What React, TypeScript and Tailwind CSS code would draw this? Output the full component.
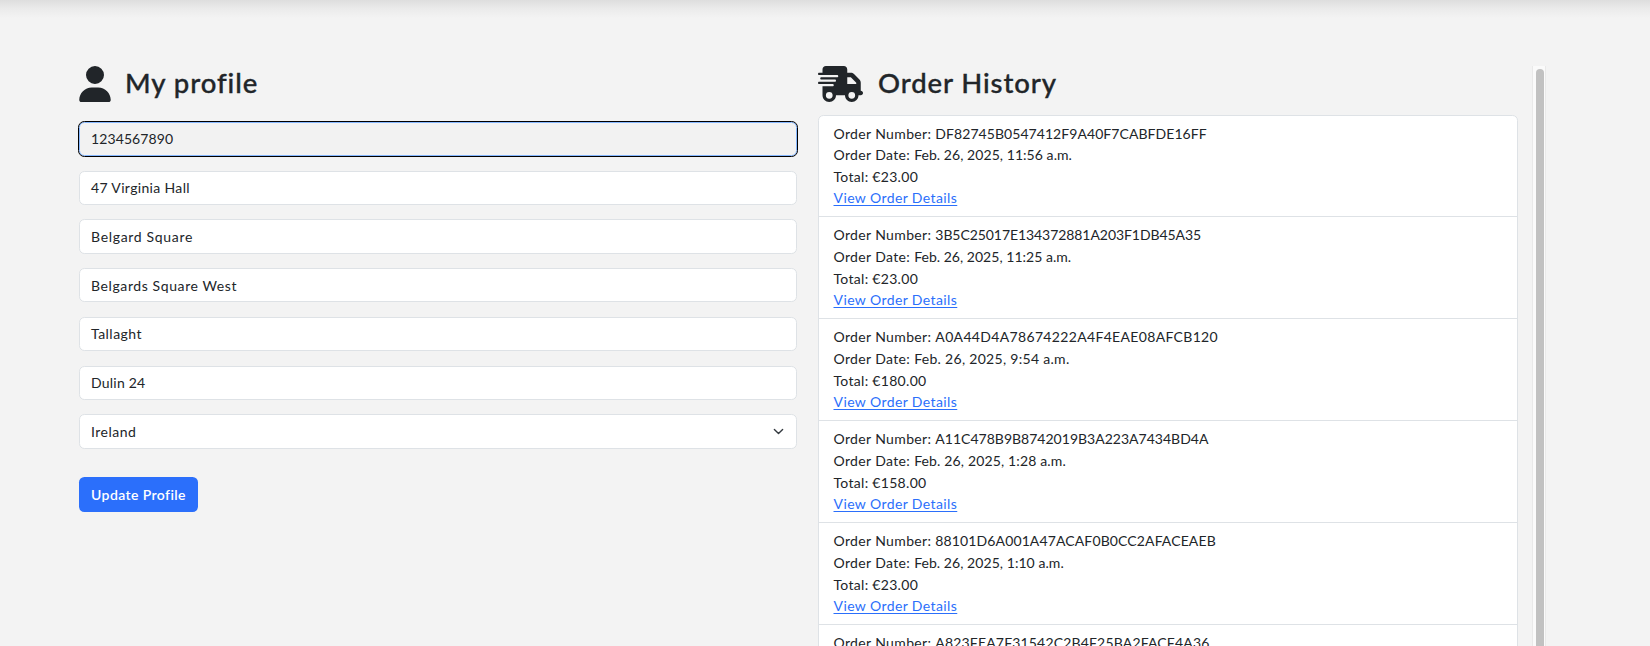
import { FaUser, FaTruckFast } from "react-icons/fa6";

const fields = [
  { value: "47 Virginia Hall", tracking: "tracking-[0.34px]" },
  { value: "Belgard Square", tracking: "tracking-[0.68px]" },
  { value: "Belgards Square West", tracking: "tracking-[0.6px]" },
  { value: "Tallaght", tracking: "tracking-[0.48px]" },
  { value: "Dulin 24", tracking: "tracking-[0.22px]" },
];

const orders = [
  { number: "DF82745B0547412F9A40F7CABFDE16FF", nt: "tracking-[0.06px]", date: "Feb. 26, 2025, 11:56 a.m.", dt: "tracking-[0.06px]", total: "€23.00" },
  { number: "3B5C25017E134372881A203F1DB45A35", nt: "tracking-[-0.07px]", date: "Feb. 26, 2025, 11:25 a.m.", dt: "tracking-[0.03px]", total: "€23.00" },
  { number: "A0A44D4A78674222A4F4EAE08AFCB120", nt: "tracking-[0.33px]", date: "Feb. 26, 2025, 9:54 a.m.", dt: "tracking-[0.3px]", total: "€180.00" },
  { number: "A11C478B9B8742019B3A223A7434BD4A", nt: "tracking-[0.01px]", date: "Feb. 26, 2025, 1:28 a.m.", dt: "tracking-[0.15px]", total: "€158.00" },
  { number: "88101D6A001A47ACAF0B0CC2AFACEAEB", nt: "tracking-[0.12px]", date: "Feb. 26, 2025, 1:10 a.m.", dt: "tracking-[0.06px]", total: "€23.00" },
  { number: "A823FEA7F31542C2B4F25BA2FACF4A36", nt: "tracking-[0.17px]", date: "Feb. 26, 2025, 1:05 a.m.", dt: "tracking-[0.06px]", total: "€23.00" },
];

export default function App() {
  return (
    <div className="h-[646px] w-full overflow-hidden bg-[#f3f3f3] font-['Lato',sans-serif] text-[14px] leading-[21.6px] text-[#212529]">
      <div className="h-[18px] bg-linear-to-b from-[#dedede] via-[#ebebeb] to-[#f3f3f3]" />
      <div className="flex pt-[48px] pl-[79px]">
        <section className="w-[718px] shrink-0">
          <h2 className="flex h-[36px] items-center text-[27.5px] font-medium">
            <FaUser className="h-[36px] w-[32px] shrink-0" />
            <span className="ml-[14px] pb-[2px] tracking-[0.95px] whitespace-nowrap [-webkit-text-stroke:0.35px]">My profile</span>
          </h2>
          <form className="mt-[19.95px] flex flex-col gap-[14.4px]">
            <div className="flex h-[34.35px] items-center rounded-[5.4px] border border-[#86b7fe] bg-[#f2f2f2] px-[11px] pb-px tracking-[0.1px] outline-1 outline-black">
              1234567890
            </div>
            {fields.map((f) => (
              <div
                key={f.value}
                className={`flex h-[34.35px] items-center rounded-[5.4px] border border-[#dee2e6] bg-white px-[11px] ${f.tracking}`}
              >
                {f.value}
              </div>
            ))}
            <div className="flex h-[34.6px] items-center justify-between rounded-[5.4px] border border-[#dee2e6] bg-white pr-[12px] pl-[11px] tracking-[0.48px]">
              Ireland
              <svg viewBox="0 0 16 16" className="h-[11px] w-[11px]" fill="none" stroke="#343a40" strokeWidth="2" strokeLinecap="round" strokeLinejoin="round">
                <path d="m2 5 6 6 6-6" />
              </svg>
            </div>
            <button
              type="button"
              className="mt-[13.6px] flex h-[35px] w-[119px] items-center justify-center rounded-[5.4px] bg-[#2b6ffb] font-semibold tracking-[0.4px] whitespace-nowrap text-white"
            >
              Update Profile
            </button>
          </form>
        </section>

        <section className="ml-[21px] w-[700px] shrink-0">
          <h2 className="flex h-[36px] items-center text-[27.5px] font-medium">
            <FaTruckFast className="h-[36px] w-[45px] shrink-0" />
            <span className="ml-[15px] pb-[2px] tracking-[0.9px] whitespace-nowrap [-webkit-text-stroke:0.35px]">Order History</span>
          </h2>
          <ul className="mt-[13px] rounded-[5.4px] border border-[#dee2e6] bg-white">
            {orders.map((o) => (
              <li
                key={o.number}
                className="h-[102px] border-b border-[#dee2e6] px-[14.5px] pt-[7.4px] tracking-[0.36px] first:h-[101px] first:pt-[6.6px]"
              >
                <p>
                  Order Number: <span className={o.nt}>{o.number}</span>
                </p>
                <p>
                  Order Date: <span className={o.dt}>{o.date}</span>
                </p>
                <p className="tracking-[0.3px]">Total: {o.total}</p>
                <a className="tracking-[0.4px] text-[#2b6ffb] underline underline-offset-2">View Order Details</a>
              </li>
            ))}
          </ul>
        </section>

        <div className="ml-[14px] h-[580px] w-[14px] shrink-0 border-x border-[#e9e9e9] bg-[#fafafa] pt-[3px] pl-[3px]">
          <div className="h-[700px] w-[8px] rounded-full bg-[#c1c1c1]" />
        </div>
      </div>
    </div>
  );
}
